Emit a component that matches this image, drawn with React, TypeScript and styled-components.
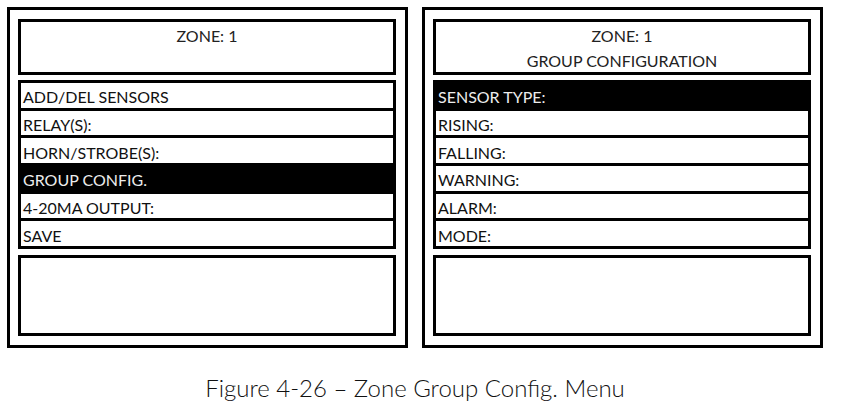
import React from "react";
import styled, { createGlobalStyle } from "styled-components";

const Global = createGlobalStyle`
  html, body {
    margin: 0;
    padding: 0;
    background: #ffffff;
  }
  body {
    font-family: "Lato", "Liberation Sans", sans-serif;
  }
`;

const Page = styled.div`
  width: 841px;
  height: 412px;
  padding: 7px 0 0 7px;
  box-sizing: border-box;
`;

const Figure = styled.figure`
  margin: 0;
  width: 816px;
  display: flex;
  flex-direction: column;
`;

const Screens = styled.div`
  display: flex;
  gap: 14px;
`;

const Screen = styled.div`
  width: 401px;
  height: 341px;
  box-sizing: border-box;
  border: 3px solid #000;
  padding: 9px 9px 9px 8px;
  display: flex;
  flex-direction: column;
`;

const Header = styled.div`
  height: 56px;
  box-sizing: border-box;
  border: 3px solid #000;
  display: flex;
  flex-direction: column;
  align-items: center;
  padding-top: 4px;
  gap: 5px;
  color: #222;
  font-size: 16px;
  line-height: 20px;
`;

const Menu = styled.div`
  margin-top: 5px;
  height: 169px;
  box-sizing: border-box;
  border: 3px solid #000;
  background: #000;
  display: flex;
  flex-direction: column;
  gap: 3px;
`;

const Row = styled.div<{ $active?: boolean }>`
  flex: 1;
  display: flex;
  align-items: center;
  padding: 3px 0 0 2px;
  background: ${(p) => (p.$active ? "#000" : "#fff")};
  color: ${(p) => (p.$active ? "#ececec" : "#111")};
  font-size: 16px;
  white-space: nowrap;
`;

const Message = styled.div`
  margin-top: 6px;
  height: 81px;
  box-sizing: border-box;
  border: 3px solid #000;
`;

const Caption = styled.figcaption`
  margin-top: 25px;
  text-align: center;
  font-size: 24px;
  font-weight: 300;
  color: #111;
`;

type Item = { label: string; active?: boolean };

const zoneMenu: Item[] = [
  { label: "ADD/DEL SENSORS" },
  { label: "RELAY(S):" },
  { label: "HORN/STROBE(S):" },
  { label: "GROUP CONFIG.", active: true },
  { label: "4-20MA OUTPUT:" },
  { label: "SAVE" },
];

const groupMenu: Item[] = [
  { label: "SENSOR TYPE:", active: true },
  { label: "RISING:" },
  { label: "FALLING:" },
  { label: "WARNING:" },
  { label: "ALARM:" },
  { label: "MODE:" },
];

function LcdScreen({ title, items }: { title: string[]; items: Item[] }) {
  return (
    <Screen>
      <Header>
        {title.map((t) => (
          <span key={t}>{t}</span>
        ))}
      </Header>
      <Menu>
        {items.map((it) => (
          <Row key={it.label} $active={it.active}>
            {it.label}
          </Row>
        ))}
      </Menu>
      <Message />
    </Screen>
  );
}

export default function App() {
  return (
    <Page>
      <Global />
      <Figure>
        <Screens>
          <LcdScreen title={["ZONE: 1"]} items={zoneMenu} />
          <LcdScreen title={["ZONE: 1", "GROUP CONFIGURATION"]} items={groupMenu} />
        </Screens>
        <Caption>Figure 4-26 – Zone Group Config. Menu</Caption>
      </Figure>
    </Page>
  );
}
